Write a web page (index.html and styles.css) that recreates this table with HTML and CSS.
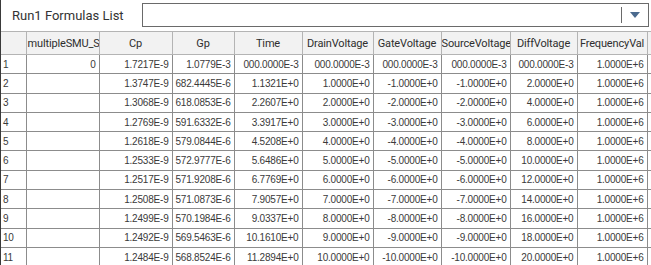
FILE: index.html
```html
<!DOCTYPE html>
<html>
<head>
<meta charset="utf-8">
<link rel="stylesheet" href="styles.css">
</head>
<body>
<div class="app">
  <div class="toolbar">
    <span class="title">Run1 Formulas List</span>
    <div class="combo">
      <div class="combo-field"></div>
      <div class="combo-btn">
        <svg width="10" height="6" viewBox="0 0 10 6"><path d="M0 0 L10 0 L5 6 Z" fill="#4b6a8e"/></svg>
      </div>
    </div>
  </div>
  <table class="grid">
    <colgroup>
      <col class="c-idx"><col class="c-smu"><col class="c-cp"><col class="c-gp"><col class="c-time"><col class="c-drain"><col class="c-gate"><col class="c-src"><col class="c-diff"><col class="c-freq"><col class="c-more">
    </colgroup>
    <thead>
      <tr>
        <th></th><th class="clip">multipleSMU_S</th><th>Cp</th><th>Gp</th><th>Time</th><th>DrainVoltage</th><th>GateVoltage</th><th>SourceVoltage</th><th>DiffVoltage</th><th>FrequencyVal</th><th></th>
      </tr>
    </thead>
    <tbody>
      <tr><td class="idx">1</td><td>0</td><td>1.7217E-9</td><td>1.0779E-3</td><td>000.0000E-3</td><td>000.0000E-3</td><td>000.0000E-3</td><td>000.0000E-3</td><td>000.0000E-3</td><td>1.0000E+6</td><td></td></tr>
      <tr><td class="idx">2</td><td></td><td>1.3747E-9</td><td>682.4445E-6</td><td>1.1321E+0</td><td>1.0000E+0</td><td>-1.0000E+0</td><td>-1.0000E+0</td><td>2.0000E+0</td><td>1.0000E+6</td><td></td></tr>
      <tr><td class="idx">3</td><td></td><td>1.3068E-9</td><td>618.0853E-6</td><td>2.2607E+0</td><td>2.0000E+0</td><td>-2.0000E+0</td><td>-2.0000E+0</td><td>4.0000E+0</td><td>1.0000E+6</td><td></td></tr>
      <tr><td class="idx">4</td><td></td><td>1.2769E-9</td><td>591.6332E-6</td><td>3.3917E+0</td><td>3.0000E+0</td><td>-3.0000E+0</td><td>-3.0000E+0</td><td>6.0000E+0</td><td>1.0000E+6</td><td></td></tr>
      <tr><td class="idx">5</td><td></td><td>1.2618E-9</td><td>579.0844E-6</td><td>4.5208E+0</td><td>4.0000E+0</td><td>-4.0000E+0</td><td>-4.0000E+0</td><td>8.0000E+0</td><td>1.0000E+6</td><td></td></tr>
      <tr><td class="idx">6</td><td></td><td>1.2533E-9</td><td>572.9777E-6</td><td>5.6486E+0</td><td>5.0000E+0</td><td>-5.0000E+0</td><td>-5.0000E+0</td><td>10.0000E+0</td><td>1.0000E+6</td><td></td></tr>
      <tr><td class="idx">7</td><td></td><td>1.2517E-9</td><td>571.9208E-6</td><td>6.7769E+0</td><td>6.0000E+0</td><td>-6.0000E+0</td><td>-6.0000E+0</td><td>12.0000E+0</td><td>1.0000E+6</td><td></td></tr>
      <tr><td class="idx">8</td><td></td><td>1.2508E-9</td><td>571.0873E-6</td><td>7.9057E+0</td><td>7.0000E+0</td><td>-7.0000E+0</td><td>-7.0000E+0</td><td>14.0000E+0</td><td>1.0000E+6</td><td></td></tr>
      <tr><td class="idx">9</td><td></td><td>1.2499E-9</td><td>570.1984E-6</td><td>9.0337E+0</td><td>8.0000E+0</td><td>-8.0000E+0</td><td>-8.0000E+0</td><td>16.0000E+0</td><td>1.0000E+6</td><td></td></tr>
      <tr><td class="idx">10</td><td></td><td>1.2492E-9</td><td>569.5463E-6</td><td>10.1610E+0</td><td>9.0000E+0</td><td>-9.0000E+0</td><td>-9.0000E+0</td><td>18.0000E+0</td><td>1.0000E+6</td><td></td></tr>
      <tr><td class="idx">11</td><td></td><td>1.2484E-9</td><td>568.8524E-6</td><td>11.2894E+0</td><td>10.0000E+0</td><td>-10.0000E+0</td><td>-10.0000E+0</td><td>20.0000E+0</td><td>1.0000E+6</td><td></td></tr>
    </tbody>
  </table>
</div>
</body>
</html>
```
FILE: styles.css
```css
html, body {
  margin: 0;
  padding: 0;
  background: #ffffff;
  overflow: hidden;
}
.app {
  width: 651px;
  height: 265px;
  overflow: hidden;
  border-left: 1px solid #3a3a3a;
  box-sizing: border-box;
  font-family: Roboto, "Liberation Sans", sans-serif;
  color: #333333;
}
.toolbar {
  height: 31px;
  display: flex;
  align-items: center;
  padding-left: 11px;
  box-sizing: border-box;
}
.title {
  font-size: 13px;
  color: #333333;
  width: 130px;
}
.combo {
  display: flex;
  width: 507px;
  height: 24px;
  border: 1px solid #6a6a6a;
  box-sizing: border-box;
  margin-top: -2px;
}
.combo-field {
  flex: 1;
}
.combo-btn {
  width: 26px;
  display: flex;
  align-items: center;
  justify-content: center;
  border-left: 1px solid #6a6a6a;
  margin: 3px 0;
}
.grid {
  border-collapse: collapse;
  table-layout: fixed;
  width: 680px;
  font-size: 10px;
}
.c-idx { width: 25px; }
.c-smu { width: 73px; }
.c-cp { width: 73px; }
.c-gp { width: 62px; }
.c-time { width: 68px; }
.c-drain { width: 71px; }
.c-gate { width: 68px; }
.c-src { width: 69px; }
.c-diff { width: 67px; }
.c-freq { width: 70px; }
.c-more { width: 34px; }
.grid th {
  height: 22px;
  background: #f2f2f2;
  border: 1px solid #b4b4b4;
  font-weight: normal;
  font-size: 11px;
  letter-spacing: -0.15px;
  color: #2e2e2e;
  text-align: center;
  padding: 0;
  white-space: nowrap;
  overflow: hidden;
}
.grid th:first-child {
  border-left: none;
}
.grid th.clip {
  text-align: left;
  padding-left: 1px;
  text-overflow: clip;
}
.grid td {
  height: 18.3px;
  border: 1px solid #8c8c8c;
  padding: 0 3px 0 0;
  text-align: right;
  white-space: nowrap;
  overflow: hidden;
  color: #3a3a3a;
  font-family: "Liberation Sans", Arial, sans-serif;
  letter-spacing: -0.2px;
}
.grid td:first-child {
  border-left: none;
}
.grid td.idx {
  text-align: left;
  padding-left: 2px;
}
```
